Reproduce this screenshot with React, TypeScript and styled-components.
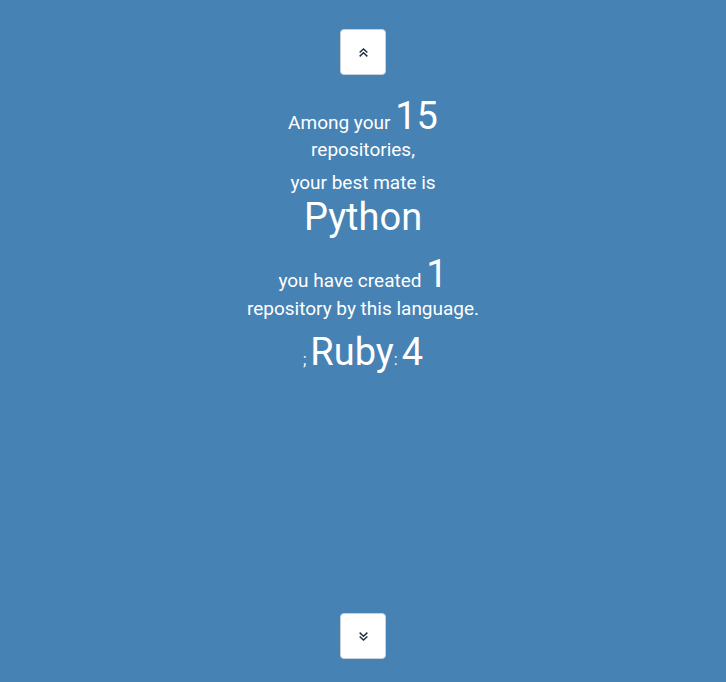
import React from "react";
import styled, { createGlobalStyle } from "styled-components";

const GlobalStyle = createGlobalStyle`
  html, body {
    margin: 0;
    padding: 0;
    background: #4682b4;
  }
  body {
    font-family: Roboto, "Liberation Sans", sans-serif;
    color: #fff;
  }
`;

const Page = styled.div`
  width: 726px;
  height: 682px;
  box-sizing: border-box;
  padding: 29px 0 23px;
  display: flex;
  flex-direction: column;
  align-items: center;
  justify-content: space-between;
  background: #4682b4;
`;

const NavButton = styled.button`
  width: 46px;
  height: 46px;
  padding: 0;
  border: 1px solid #c9d0d8;
  border-radius: 4px;
  background: #fff;
  display: flex;
  align-items: center;
  justify-content: center;
  cursor: pointer;
  color: #1f2d3d;
`;

const Story = styled.div`
  flex: 1;
  display: flex;
  flex-direction: column;
  align-items: center;
  text-align: center;
  padding-top: 22px;
`;

const Line = styled.div<{ $gap?: number }>`
  font-size: 19px;
  line-height: 27px;
  margin-top: ${(p) => p.$gap ?? 0}px;
`;

const Big = styled.span`
  font-size: 38px;
  line-height: 1;
`;

const BigLine = styled.div<{ $gap?: number }>`
  font-size: 38px;
  line-height: 44px;
  margin-top: ${(p) => p.$gap ?? 0}px;
`;

const Tiny = styled.span`
  font-size: 16px;
`;

const Chevrons = ({ up }: { up?: boolean }) => (
  <svg width="11" height="11" viewBox="0 0 10 10" fill="none" stroke="currentColor" strokeWidth="1.3">
    {up ? (
      <>
        <path d="M1.5 5 L5 1.8 L8.5 5" />
        <path d="M1.5 8.5 L5 5.3 L8.5 8.5" />
      </>
    ) : (
      <>
        <path d="M1.5 1.5 L5 4.7 L8.5 1.5" />
        <path d="M1.5 5 L5 8.2 L8.5 5" />
      </>
    )}
  </svg>
);

export default function App() {
  return (
    <>
      <GlobalStyle />
      <Page>
        <NavButton aria-label="previous">
          <Chevrons up />
        </NavButton>
        <Story>
          <Line>
            Among your <Big>15</Big>
          </Line>
          <Line>repositories,</Line>
          <Line $gap={6}>your best mate is</Line>
          <BigLine $gap={-1}>Python</BigLine>
          <Line $gap={16}>
            you have created <Big>1</Big>
          </Line>
          <Line $gap={1}>repository by this language.</Line>
          <BigLine $gap={8}>
            <Tiny>; </Tiny>Ruby<Tiny>: </Tiny>4
          </BigLine>
        </Story>
        <NavButton aria-label="next">
          <Chevrons />
        </NavButton>
      </Page>
    </>
  );
}
